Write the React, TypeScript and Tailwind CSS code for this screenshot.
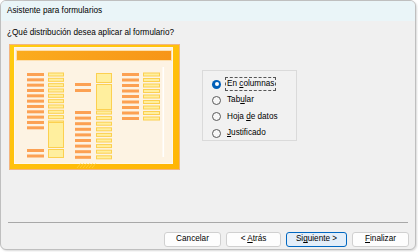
import React from "react";

const FONT = { fontFamily: '"Liberation Sans", Arial, sans-serif' };

function Picture() {
  const orange = "#fca153";
  const yFill = "#ffef9e";
  const yStroke = "#fcd050";
  const bars: React.ReactNode[] = [];
  const lab = (x: number, y: number, w: number, k: string) =>
    bars.push(<rect key={k} x={x} y={y} width={w} height={3} fill={orange} />);
  const box = (x: number, y: number, w: number, h: number, k: string) =>
    bars.push(
      <rect key={k} x={x + 0.5} y={y + 0.5} width={w - 1} height={h - 1} fill={yFill} stroke={yStroke} strokeWidth={1} />
    );
  for (let i = 0; i < 11; i++) lab(18, 29 + i * 5.33, 17, "a" + i);
  lab(18, 105, 17, "a11");
  lab(18, 110.5, 17, "a12");
  for (let i = 0; i < 10; i++) box(39, 28.5 + i * 5.33, 16, 4, "b" + i);
  box(39, 78, 16, 26, "bb");
  box(39, 105, 16, 9, "bc");
  lab(66, 39, 16, "c0");
  lab(66, 45, 16, "c1");
  for (let i = 0; i < 9; i++) lab(66, 67 + i * 5.6, 16, "c" + (i + 2));
  box(87, 29, 16, 10, "d0");
  box(87, 40, 16, 26, "d1");
  for (let i = 0; i < 9; i++) box(87, 66.5 + i * 5.6, 16, 4, "d" + (i + 2));
  for (let i = 0; i < 9; i++) lab(113, 29 + i * 5.5, 17, "e" + i);
  for (let i = 0; i < 9; i++) box(134, 28.5 + i * 5.5, 17, 4, "f" + i);

  return (
    <svg width="171" height="126" viewBox="0 0 171 126" className="block shrink-0">
      <defs>
        <linearGradient id="gold" x1="0" y1="0" x2="1" y2="1">
          <stop offset="0" stopColor="#ffcc10" />
          <stop offset="1" stopColor="#ffb506" />
        </linearGradient>
        <linearGradient id="tb" x1="0" y1="0" x2="1" y2="0">
          <stop offset="0" stopColor="#fbac1e" />
          <stop offset="1" stopColor="#f79518" />
        </linearGradient>
      </defs>
      <rect x="0.5" y="0.5" width="170" height="125" fill="url(#gold)" stroke="#f3b57e" />
      <rect x="5.5" y="3.5" width="158" height="116" fill="#fdf3e3" stroke="#fff8ec" />
      <rect x="7.5" y="6.5" width="155" height="10" fill="url(#tb)" stroke="#fde0b0" />
      <rect x="153.5" y="23" width="1.6" height="90" fill="#ffffff" />
      {bars}
      <g stroke="#ffd95a" strokeWidth="1" opacity="0.6">
        <line x1="68" y1="124" x2="72" y2="119" />
        <line x1="71" y1="124" x2="75" y2="119" />
        <line x1="74" y1="124" x2="78" y2="119" />
        <line x1="77" y1="124" x2="81" y2="119" />
        <line x1="80" y1="124" x2="84" y2="119" />
        <line x1="83" y1="124" x2="87" y2="119" />
      </g>
    </svg>
  );
}

function Radio({ checked }: { checked?: boolean }) {
  return checked ? (
    <span className="w-[9px] h-[9px] rounded-full bg-[#005fb8] flex items-center justify-center shrink-0">
      <span className="w-[4px] h-[4px] rounded-full bg-white" />
    </span>
  ) : (
    <span className="w-[9px] h-[9px] rounded-full border border-[#5a5a5a] bg-[#f7f7f7] shrink-0" />
  );
}

function Option({ children, checked, focus }: { children: React.ReactNode; checked?: boolean; focus?: boolean }) {
  return (
    <div className="flex items-center h-[16.3px]">
      <Radio checked={checked} />
      <span
        className={
          "ml-[4px] px-[1px] leading-[12px] " +
          (focus ? "border border-dashed border-[#555]" : "border border-transparent")
        }
      >
        {children}
      </span>
    </div>
  );
}

function Btn({ children, primary, w }: { children: React.ReactNode; primary?: boolean; w: string }) {
  return (
    <div
      className={
        "h-[15px] rounded-[3px] flex items-center justify-center text-[8.2px] leading-none " +
        w +
        " " +
        (primary ? "border border-[#0067c0] bg-[#e3eef9]" : "border border-[#d0d0d0] bg-[#fdfdfd]")
      }
    >
      <span className="whitespace-pre">{children}</span>
    </div>
  );
}

export default function App() {
  return (
    <div className="w-[418px] h-[252px] bg-white" style={FONT}>
      <div className="w-[416px] h-[250px] rounded-[6px] border border-[#bfbfbf] bg-[#f0f0f0] overflow-hidden flex flex-col text-black shadow-[1px_1px_2px_rgba(0,0,0,0.15)]">
        <div className="h-[20px] bg-[#eaf5f8] pl-[6px] flex items-center text-[8.2px] shrink-0">
          Asistente para formularios
        </div>
        <div className="pl-[6px] mt-[6px] text-[8.2px] leading-[12px]">¿Qué distribución desea aplicar al formulario?</div>
        <div className="flex mt-[5px] pl-[8px]">
          <Picture />
          <div className="ml-[22px] mt-[26px] w-[95px] h-[71px] border border-[#dadada] bg-[#f1f1f1] pl-[9px] pt-[5px] text-[8.2px]">
            <Option checked focus>
              En <u>c</u>olumnas
            </Option>
            <Option>
              Tab<u>u</u>lar
            </Option>
            <Option>
              Hoja <u>d</u>e datos
            </Option>
            <Option>
              <u>J</u>ustificado
            </Option>
          </div>
        </div>
        <div className="mx-[7px] mt-[52px] h-[1px] bg-[#a8a8a8] shrink-0" />
        <div className="flex justify-end gap-[5px] pr-[6px] mt-[9px]">
          <Btn w="w-[57px]">Cancelar</Btn>
          <Btn w="w-[55px]">
            {"< "}
            <u>A</u>trás
          </Btn>
          <Btn w="w-[61px]" primary>
            Si<u>g</u>uiente{" >"}
          </Btn>
          <Btn w="w-[57px]">
            <u>F</u>inalizar
          </Btn>
        </div>
      </div>
    </div>
  );
}
